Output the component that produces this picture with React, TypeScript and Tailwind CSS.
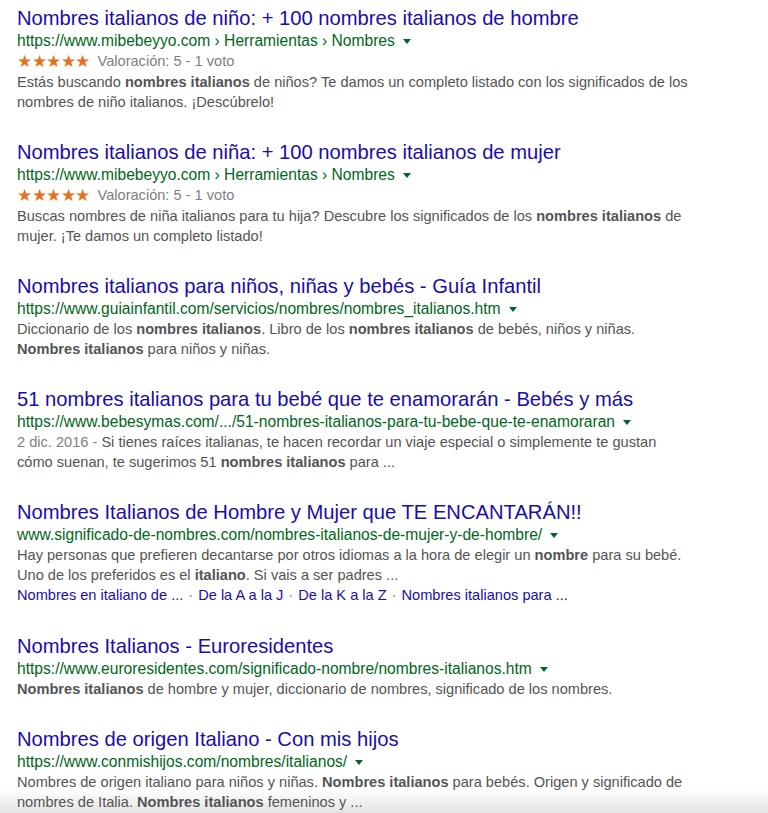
import type { ReactNode } from 'react';

type Result = {
  title: string;
  url: string;
  rating?: boolean;
  snippet: ReactNode;
  links?: string[];
};

const b = (t: string) => <b className="font-bold text-[#545454]">{t}</b>;

const results: Result[] = [
  {
    title: 'Nombres italianos de niño: + 100 nombres italianos de hombre',
    url: 'https://www.mibebeyyo.com › Herramientas › Nombres',
    rating: true,
    snippet: (
      <>
        Estás buscando {b('nombres italianos')} de niños? Te damos un completo listado con los significados de los
        <br />
        nombres de niño italianos. ¡Descúbrelo!
      </>
    ),
  },
  {
    title: 'Nombres italianos de niña: + 100 nombres italianos de mujer',
    url: 'https://www.mibebeyyo.com › Herramientas › Nombres',
    rating: true,
    snippet: (
      <>
        Buscas nombres de niña italianos para tu hija? Descubre los significados de los {b('nombres italianos')} de
        <br />
        mujer. ¡Te damos un completo listado!
      </>
    ),
  },
  {
    title: 'Nombres italianos para niños, niñas y bebés - Guía Infantil',
    url: 'https://www.guiainfantil.com/servicios/nombres/nombres_italianos.htm',
    snippet: (
      <>
        Diccionario de los {b('nombres italianos')}. Libro de los {b('nombres italianos')} de bebés, niños y niñas.
        <br />
        {b('Nombres italianos')} para niños y niñas.
      </>
    ),
  },
  {
    title: '51 nombres italianos para tu bebé que te enamorarán - Bebés y más',
    url: 'https://www.bebesymas.com/.../51-nombres-italianos-para-tu-bebe-que-te-enamoraran',
    snippet: (
      <>
        <span className="text-[#808080]">2 dic. 2016 - </span>Si tienes raíces italianas, te hacen recordar un viaje especial o simplemente te gustan
        <br />
        cómo suenan, te sugerimos 51 {b('nombres italianos')} para ...
      </>
    ),
  },
  {
    title: 'Nombres Italianos de Hombre y Mujer que TE ENCANTARÁN!!',
    url: 'www.significado-de-nombres.com/nombres-italianos-de-mujer-y-de-hombre/',
    snippet: (
      <>
        Hay personas que prefieren decantarse por otros idiomas a la hora de elegir un {b('nombre')} para su bebé.
        <br />
        Uno de los preferidos es el {b('italiano')}. Si vais a ser padres ...
      </>
    ),
    links: ['Nombres en italiano de ...', 'De la A a la J', 'De la K a la Z', 'Nombres italianos para ...'],
  },
  {
    title: 'Nombres Italianos - Euroresidentes',
    url: 'https://www.euroresidentes.com/significado-nombre/nombres-italianos.htm',
    snippet: (
      <>
        {b('Nombres italianos')} de hombre y mujer, diccionario de nombres, significado de los nombres.
      </>
    ),
  },
  {
    title: 'Nombres de origen Italiano - Con mis hijos',
    url: 'https://www.conmishijos.com/nombres/italianos/',
    snippet: (
      <>
        Nombres de origen italiano para niños y niñas. {b('Nombres italianos')} para bebés. Origen y significado de
        <br />
        nombres de Italia. {b('Nombres italianos')} femeninos y ...
      </>
    ),
  },
];

function Stars() {
  return (
    <span className="text-[#e7711b] text-[16.5px] tracking-[-0.5px] mr-[8px]">★★★★★</span>
  );
}

function ResultItem({ r }: { r: Result }) {
  return (
    <div className="flex flex-col">
      <div className="text-[20.2px] leading-[26px] text-[#1a0dab] whitespace-nowrap">{r.title}</div>
      <div className="text-[15.6px] leading-[20px] text-[#006621] whitespace-nowrap flex items-center">
        <span>{r.url}</span>
        <span className="ml-[8px] mt-[1px] inline-block w-0 h-0 border-l-[4px] border-r-[4px] border-t-[5px] border-l-transparent border-r-transparent border-t-[#006621]" />
      </div>
      {r.rating && (
        <div className="text-[14.6px] leading-[21px] text-[#808080] whitespace-nowrap flex items-center">
          <Stars />
          Valoración: 5 - 1 voto
        </div>
      )}
      <div className="text-[14.6px] leading-[20px] text-[#545454] whitespace-nowrap">{r.snippet}</div>
      {r.links && (
        <div className="text-[14.6px] leading-[21px] text-[#1a0dab] whitespace-nowrap">
          {r.links.map((l, i) => (
            <span key={l}>
              {i > 0 && <span className="text-[#808080] mx-[5px]">·</span>}
              {l}
            </span>
          ))}
        </div>
      )}
    </div>
  );
}

export default function App() {
  return (
    <div className="relative w-[768px] h-[813px] overflow-hidden bg-white" style={{ fontFamily: '"Liberation Sans", Arial, sans-serif' }}>
      <div className="absolute left-0 right-0 bottom-0 h-[24px] bg-gradient-to-b from-white to-[#e4e4e4]" />
      <div className="relative flex flex-col gap-[27px] pl-[17px] pt-[5px]">
        {results.map((r) => (
          <ResultItem key={r.title} r={r} />
        ))}
      </div>
    </div>
  );
}
